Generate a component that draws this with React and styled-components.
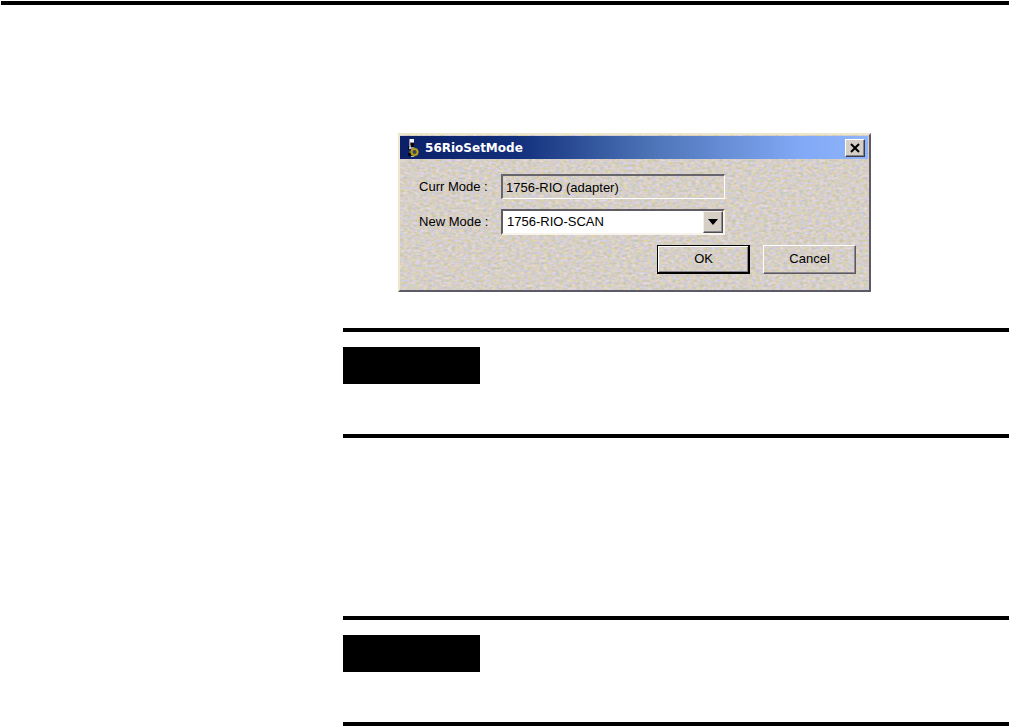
import React from "react";
import styled, { createGlobalStyle } from "styled-components";

const GlobalStyle = createGlobalStyle`
  * { box-sizing: border-box; }
  body { margin: 0; background: #fff; color: #000; }
`;

const face = "#d6cfc6";
const uiFont = `"Liberation Sans", Arial, sans-serif`;

const Page = styled.main`
  padding-top: 1px;
`;

const Rule = styled.hr`
  height: 4px;
  margin: 0 0 0 ${(p) => p.$inset || 0}px;
  border: 0;
  background: #000;
`;

const Column = styled.div`
  padding: 128px 0 0 34%;
`;

const Dialog = styled.section`
  position: relative;
  isolation: isolate;
  width: 473px;
  max-width: 100%;
  margin-left: 55px;
  padding: 1px 1px 16px 0;
  border: 2px solid;
  border-color: #ece6cc #5c5a66 #5c5a66 #ece6cc;
  background: ${face};
  font: 13px/16px ${uiFont};
`;

const Grain = styled.svg`
  position: absolute;
  inset: 0;
  z-index: -1;
  width: 100%;
  height: 100%;
`;

const TitleBar = styled.header`
  display: flex;
  align-items: center;
  height: 23px;
  padding: 0 3px 0 6px;
  background: linear-gradient(90deg, #0c2068 0%, #12307c 25%, #4a70b4 52%, #80a8f4 85%, #90b4fc 100%);
`;

const Title = styled.h1`
  flex: 1;
  margin: 0 0 0 5px;
  color: #fff;
  font: bold 12px/16px "DejaVu Sans", Verdana, sans-serif;
`;

const CloseButton = styled.button`
  display: grid;
  place-items: center;
  width: 20px;
  height: 18px;
  padding: 0;
  border: 1px solid;
  border-color: #fff #3c3a42 #3c3a42 #fff;
  background: ${face};
  box-shadow: inset -1px -1px #88848c;
`;

const Form = styled.form`
  display: grid;
  gap: 10px;
  padding: 15px 12px 0 19px;
`;

const Row = styled.div`
  display: grid;
  grid-template-columns: 82px 224px;
  align-items: center;
`;

const Label = styled.label`
  white-space: nowrap;
`;

const ModeInput = styled.input`
  width: 100%;
  height: 25px;
  padding: 0 3px;
  border: 2px solid;
  border-color: #68646c #fff #fff #68646c;
  border-right-width: 1px;
  border-bottom-width: 1px;
  border-radius: 0;
  background: transparent;
  color: #000;
  font: 13px/16px ${uiFont};
  outline: 0;
`;

const SelectBox = styled.div`
  position: relative;
  height: 26px;
  border: 2px solid;
  border-color: #605c64 #f8f4ec #f8f4ec #605c64;
  background: #fff;
`;

const ModeSelect = styled.select`
  display: block;
  width: 100%;
  height: 100%;
  padding: 0 24px 0 4px;
  border: 0;
  border-radius: 0;
  appearance: none;
  background: #fff;
  color: #000;
  font: 13px/16px ${uiFont};
  outline: 0;
`;

const DropArrow = styled.span`
  position: absolute;
  top: 0;
  right: 0;
  bottom: 0;
  display: grid;
  place-items: center;
  width: 20px;
  border: 1px solid;
  border-color: #f4f0e4 #4c4a52 #4c4a52 #f4f0e4;
  background: ${face};
  box-shadow: inset -1px -1px #8c8890;
  pointer-events: none;
`;

const Actions = styled.div`
  display: flex;
  justify-content: flex-end;
  gap: 13px;
`;

const Button = styled.button`
  width: 93px;
  height: 29px;
  padding: 0 0 2px;
  border: 1px solid;
  border-color: ${(p) => (p.$primary ? "#000" : "#fff #5c5862 #5c5862 #fff")};
  border-radius: 0;
  background: transparent;
  box-shadow: ${(p) =>
    p.$primary
      ? "inset -1px -1px #000, inset 1px 1px #fff, inset -2px -2px #88848c"
      : "inset -1px -1px #8c8890"};
  color: #000;
  font: 13px/16px ${uiFont};
`;

const Note = styled.aside`
  margin-top: ${(p) => p.$space}px;
`;

const NoteTag = styled.div`
  width: 137px;
  height: 37px;
  margin: 15px 0 50px;
  background: #000;
`;

function DialogGrain() {
  return (
    <Grain aria-hidden="true">
      <filter id="grain" x="0" y="0" width="100%" height="100%" colorInterpolationFilters="sRGB">
        <feTurbulence type="fractalNoise" baseFrequency="0.25 0.4" numOctaves="2" seed="4" />
        <feColorMatrix
          values="0.25 0 0 0 0.715
                  0.1 0.1 0 0 0.712
                  0 0 0.5 0 0.53
                  0 0 0 0 1"
        />
      </filter>
      <rect width="100%" height="100%" filter="url(#grain)" />
    </Grain>
  );
}

function AppIcon() {
  return (
    <svg width="14" height="20" viewBox="0 0 14 20" aria-hidden="true">
      <path d="M3 1h5v10H3z" fill="#8c98b4" />
      <path d="M4 1h4v3H4z" fill="#f0f2f6" />
      <path d="M5 5h3v4H5zM2 8h1v4H2zM2 15h3v3H2z" fill="#080808" />
      <path d="M3 9h2v2H3zM5 18h3v1H5z" fill="#c0c4cc" />
      <path d="M4 5h1v2H4z" fill="#a83820" />
      <path d="M8 9v10M3 14h10M5 11l7 6M12 11l-7 6" stroke="#8c7c18" strokeWidth="1" />
      <circle cx="8.500" cy="14" r="3" fill="#3c4450" stroke="#b09c1c" strokeWidth="2" />
    </svg>
  );
}

function ModeNote({ space }) {
  return (
    <Note $space={space}>
      <Rule />
      <NoteTag />
      <Rule />
    </Note>
  );
}

export default function App() {
  return (
    <Page>
      <GlobalStyle />
      <Rule $inset={1} />
      <Column>
        <Dialog role="dialog" aria-labelledby="dialog-title">
          <DialogGrain />
          <TitleBar>
            <AppIcon />
            <Title id="dialog-title">56RioSetMode</Title>
            <CloseButton type="button" aria-label="Close">
              <svg width="10" height="10" viewBox="0 0 10 10" aria-hidden="true">
                <path d="M1 1l8 8M9 1l-8 8" stroke="#000" strokeWidth="2" />
              </svg>
            </CloseButton>
          </TitleBar>
          <Form onSubmit={(e) => e.preventDefault()}>
            <Row>
              <Label htmlFor="curr-mode">Curr Mode :</Label>
              <ModeInput id="curr-mode" readOnly value="1756-RIO (adapter)" />
            </Row>
            <Row>
              <Label htmlFor="new-mode">New Mode :</Label>
              <SelectBox>
                <ModeSelect id="new-mode" defaultValue="scan">
                  <option value="scan">1756-RIO-SCAN</option>
                </ModeSelect>
                <DropArrow>
                  <svg width="10" height="6" viewBox="0 0 10 6" aria-hidden="true">
                    <path d="M0 0h10L5 6z" fill="#000" />
                  </svg>
                </DropArrow>
              </SelectBox>
            </Row>
            <Actions>
              <Button type="submit" $primary>OK</Button>
              <Button type="button">Cancel</Button>
            </Actions>
          </Form>
        </Dialog>
        <ModeNote space={36} />
        <ModeNote space={178} />
      </Column>
    </Page>
  );
}
